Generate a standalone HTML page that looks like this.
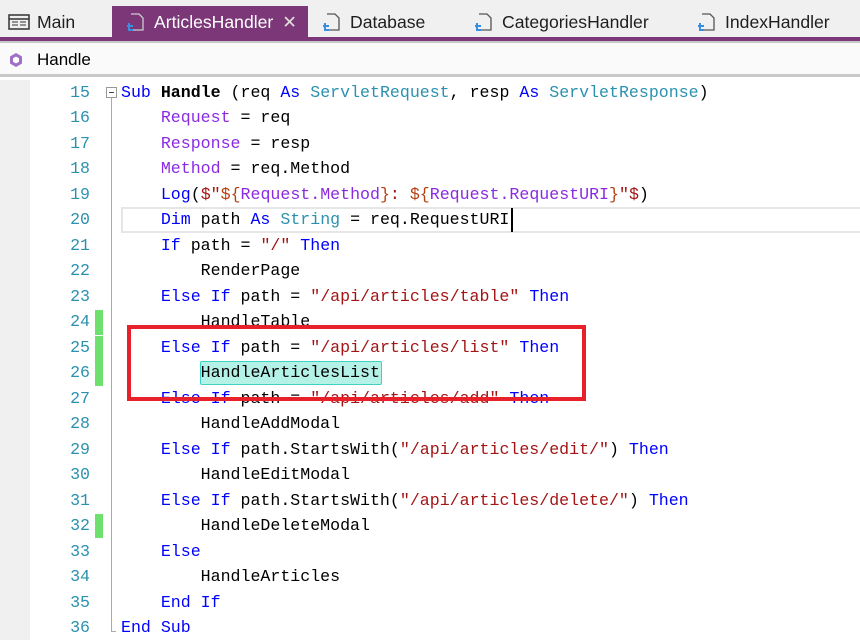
<!DOCTYPE html>
<html><head><meta charset="utf-8"><style>
*{margin:0;padding:0;box-sizing:border-box}
body{width:860px;height:640px;overflow:hidden;background:#fff;font-family:"Liberation Sans",sans-serif;position:relative}
.tabs{position:absolute;left:0;top:0;width:860px;height:38px;background:#f0f0f0}
.tab{position:absolute;top:6px;height:32px;font-size:17.6px;color:#1e1e1e;line-height:32px;white-space:nowrap}
.act{background:#7b3778;color:#fff}
.pl{position:absolute;top:37px;left:0;width:860px;height:4px;background:#7b3778}
.gl{position:absolute;top:41px;left:0;width:860px;height:2px;background:#c8c8c8}
.bc{position:absolute;top:43px;left:0;width:860px;height:34px;background:#fafafa;border-bottom:3px solid #c8c8c8;font-size:17px;line-height:34px}
.lm{position:absolute;left:0;top:80px;width:30px;height:560px;background:#f0f0f0}
.code{position:absolute;left:0;top:79.5px;font-family:"Liberation Mono",monospace;font-size:16.6px}
.ln{position:absolute;left:40px;width:50px;text-align:right;color:#2b91af;height:25.5px;line-height:25.5px}
.cl{position:absolute;left:121px;white-space:pre;height:25.5px;line-height:25.5px;color:#000}
.k{color:#0000ff}.t{color:#2b91af}.s{color:#a31515}.p{color:#8a2be2}.b{font-weight:bold}.r{color:#b5400f}
.gb{position:absolute;left:95px;width:8px;background:#6ee06e}
</style></head><body>
<div class="tabs">
 <div class="tab" style="left:8px"><svg width="22" height="18" style="vertical-align:-3px" viewBox="0 0 22 18"><rect x="1" y="2" width="20" height="14" fill="none" stroke="#333" stroke-width="1.5"/><line x1="1" y1="6" x2="21" y2="6" stroke="#333" stroke-width="1.5"/><line x1="4" y1="9" x2="10" y2="9" stroke="#333"/><line x1="12" y1="9" x2="18" y2="9" stroke="#333"/><line x1="4" y1="12" x2="10" y2="12" stroke="#333"/><line x1="12" y1="12" x2="18" y2="12" stroke="#333"/></svg><span style="margin-left:7px">Main</span></div>
 <div class="tab act" style="left:112px;width:196px;padding-left:12px"><svg width="22" height="22" style="vertical-align:-5px" viewBox="0 0 22 22"><path d="M7 3h8l4 4v12h-12" fill="none" stroke="#ccc" stroke-width="1.3"/><path d="M3 15h6M5 12v7h4" fill="none" stroke="#3a8ee0" stroke-width="2"/></svg><span style="margin-left:8px">ArticlesHandler</span><span style="margin-left:9px;color:#ddd">✕</span></div>
 <div class="tab" style="left:320px"><svg width="22" height="22" style="vertical-align:-5px" viewBox="0 0 22 22"><path d="M7 3h8l4 4v12h-12" fill="none" stroke="#555" stroke-width="1.3"/><path d="M3 15h6M5 12v7h4" fill="none" stroke="#3a8ee0" stroke-width="2"/></svg><span style="margin-left:8px">Database</span></div>
 <div class="tab" style="left:472px"><svg width="22" height="22" style="vertical-align:-5px" viewBox="0 0 22 22"><path d="M7 3h8l4 4v12h-12" fill="none" stroke="#555" stroke-width="1.3"/><path d="M3 15h6M5 12v7h4" fill="none" stroke="#3a8ee0" stroke-width="2"/></svg><span style="margin-left:8px">CategoriesHandler</span></div>
 <div class="tab" style="left:695px"><svg width="22" height="22" style="vertical-align:-5px" viewBox="0 0 22 22"><path d="M7 3h8l4 4v12h-12" fill="none" stroke="#555" stroke-width="1.3"/><path d="M3 15h6M5 12v7h4" fill="none" stroke="#3a8ee0" stroke-width="2"/></svg><span style="margin-left:8px">IndexHandler</span></div>
</div>
<div class="pl"></div><div class="gl"></div>
<div class="bc"><svg width="16" height="16" style="position:absolute;left:8px;top:9px" viewBox="0 0 16 16"><path d="M8 1l6 3.5v7L8 15 2 11.5v-7z" fill="#a070c8"/><path d="M8 4.5l3 1.8v3.5L8 11.5 5 9.8V6.3z" fill="#fff"/></svg><span style="position:absolute;left:37px">Handle</span></div>
<div class="lm"></div>
<div style="position:absolute;left:111px;top:98px;width:1px;height:534px;background:#aaa"></div>
<div style="position:absolute;left:111px;top:631px;width:5px;height:1px;background:#aaa"></div>
<div style="position:absolute;left:106px;top:87px;width:11px;height:11px;border:1px solid #999;background:#fff"><div style="position:absolute;left:2px;top:4px;width:5px;height:1px;background:#444"></div></div>
<div class="gb" style="top:310px;height:25px"></div>
<div class="gb" style="top:336px;height:50px"></div>
<div class="gb" style="top:514px;height:24px"></div>
<div style="position:absolute;left:121px;top:207px;width:739px;height:26px;border:2px solid #e6e6e6;border-right:none"></div>
<div style="position:absolute;left:200px;top:361px;width:182px;height:24px;background:#b4f2e8;border:1px solid #3ed1c4;border-radius:2px"></div>
<div style="position:absolute;left:511px;top:208px;width:2px;height:24px;background:#000"></div>
<div class="code">
<div class="ln" style="top:0">15</div><div class="cl" style="top:0"><span class="k">Sub</span> <span class="b">Handle</span> (req <span class="k">As</span> <span class="t">ServletRequest</span>, resp <span class="k">As</span> <span class="t">ServletResponse</span>)</div>
<div class="ln" style="top:25.5px">16</div><div class="cl" style="top:25.5px">    <span class="p">Request</span> = req</div>
<div class="ln" style="top:51px">17</div><div class="cl" style="top:51px">    <span class="p">Response</span> = resp</div>
<div class="ln" style="top:76.5px">18</div><div class="cl" style="top:76.5px">    <span class="p">Method</span> = req.Method</div>
<div class="ln" style="top:102px">19</div><div class="cl" style="top:102px">    <span class="k">Log</span>(<span class="s">$"</span><span class="r">${</span><span class="p">Request.Method</span><span class="r">}</span><span class="s">: </span><span class="r">${</span><span class="p">Request.RequestURI</span><span class="r">}</span><span class="s">"$</span>)</div>
<div class="ln" style="top:127.5px">20</div><div class="cl" style="top:127.5px">    <span class="k">Dim</span> path <span class="k">As</span> <span class="t">String</span> = req.RequestURI</div>
<div class="ln" style="top:153px">21</div><div class="cl" style="top:153px">    <span class="k">If</span> path = <span class="s">"/"</span> <span class="k">Then</span></div>
<div class="ln" style="top:178.5px">22</div><div class="cl" style="top:178.5px">        RenderPage</div>
<div class="ln" style="top:204px">23</div><div class="cl" style="top:204px">    <span class="k">Else If</span> path = <span class="s">"/api/articles/table"</span> <span class="k">Then</span></div>
<div class="ln" style="top:229.5px">24</div><div class="cl" style="top:229.5px">        HandleTable</div>
<div class="ln" style="top:255px">25</div><div class="cl" style="top:255px">    <span class="k">Else If</span> path = <span class="s">"/api/articles/list"</span> <span class="k">Then</span></div>
<div class="ln" style="top:280.5px">26</div><div class="cl" style="top:280.5px">        HandleArticlesList</div>
<div class="ln" style="top:306px">27</div><div class="cl" style="top:306px">    <span class="k">Else If</span> path = <span class="s">"/api/articles/add"</span> <span class="k">Then</span></div>
<div class="ln" style="top:331.5px">28</div><div class="cl" style="top:331.5px">        HandleAddModal</div>
<div class="ln" style="top:357px">29</div><div class="cl" style="top:357px">    <span class="k">Else If</span> path.StartsWith(<span class="s">"/api/articles/edit/"</span>) <span class="k">Then</span></div>
<div class="ln" style="top:382.5px">30</div><div class="cl" style="top:382.5px">        HandleEditModal</div>
<div class="ln" style="top:408px">31</div><div class="cl" style="top:408px">    <span class="k">Else If</span> path.StartsWith(<span class="s">"/api/articles/delete/"</span>) <span class="k">Then</span></div>
<div class="ln" style="top:433.5px">32</div><div class="cl" style="top:433.5px">        HandleDeleteModal</div>
<div class="ln" style="top:459px">33</div><div class="cl" style="top:459px">    <span class="k">Else</span></div>
<div class="ln" style="top:484.5px">34</div><div class="cl" style="top:484.5px">        HandleArticles</div>
<div class="ln" style="top:510px">35</div><div class="cl" style="top:510px">    <span class="k">End If</span></div>
<div class="ln" style="top:535.5px">36</div><div class="cl" style="top:535.5px"><span class="k">End Sub</span></div>
</div>
<div style="position:absolute;left:127px;top:325px;width:459px;height:76px;border:4px solid #e8202a"></div>
</body></html>
